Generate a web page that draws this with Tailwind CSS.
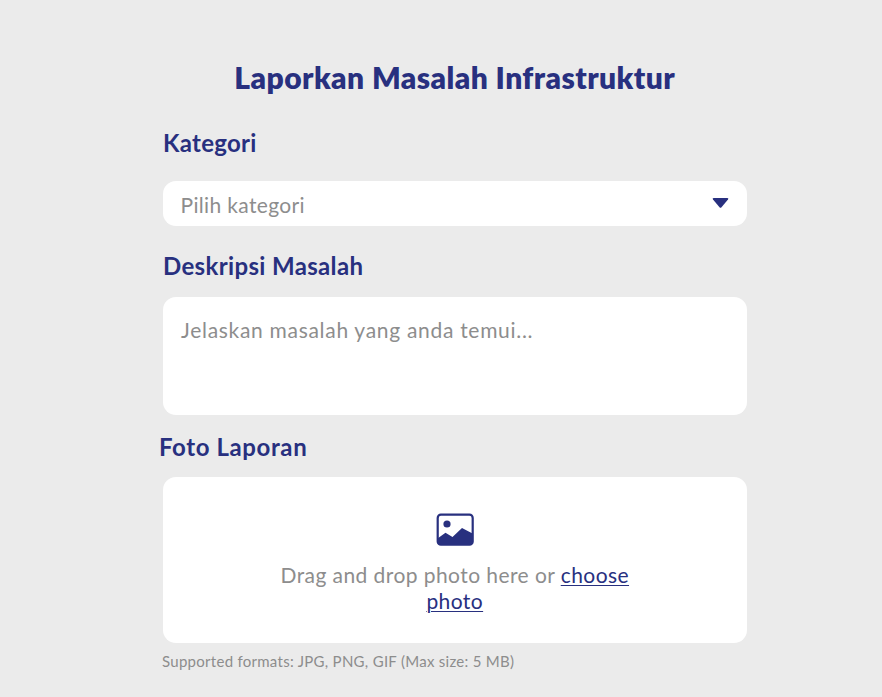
<!DOCTYPE html>
<html lang="id">
<head>
<meta charset="utf-8">
<title>Laporkan Masalah Infrastruktur</title>
<script src="https://cdn.jsdelivr.net/npm/@tailwindcss/browser@4"></script>
</head>
<body class="bg-[#ebebeb] font-['Lato',sans-serif] text-[#28307f] h-[697px] overflow-hidden">
<main class="ml-[163px] w-[583.5px] pt-[57px]">
  <h1 class="h-10 text-center text-[30px] leading-10 font-extrabold whitespace-nowrap"><span class="tracking-[0.43px]">Laporkan Masalah Infrastruktur</span></h1>
  <h2 class="mt-[30px] h-8 text-[24px] leading-8 font-bold"><span class="tracking-[0.3px]">Kategori</span></h2>
  <div class="mt-[22px] flex h-[44.5px] items-start justify-between rounded-[13px] bg-white pl-[17.5px] pr-[18px] pt-[9.5px] text-[21px] leading-7 text-[#8d8d8d]">
    <span class="tracking-[0.35px]">Pilih kategori</span>
    <svg class="mt-[6.5px] h-[12px] w-[17px] text-[#28307f]" viewBox="0 0 17 12" fill="currentColor"><path d="M1.6 1H15.4Q17 1.2 16 2.5L9.5 10.2Q8.5 11.2 7.5 10.2L1 2.5Q0 1.2 1.6 1Z"/></svg>
  </div>
  <h2 class="mt-[24px] h-8 text-[24px] leading-8 font-bold"><span class="tracking-[0.35px]">Deskripsi Masalah</span></h2>
  <div class="mt-[15.5px] h-[117.5px] rounded-[13px] bg-white px-[18px] pt-[19px] text-[21px] leading-7 text-[#8d8d8d]"><span class="tracking-[0.7px]">Jelaskan masalah yang anda temui...</span></div>
  <h2 class="-ml-1 mt-[16px] h-8 text-[24px] leading-8 font-bold"><span class="tracking-[0.6px]">Foto Laporan</span></h2>
  <div class="mt-[14.5px] flex h-[165.5px] flex-col items-center rounded-[13px] bg-white pt-9 text-[21px] leading-[26px] text-[#8d8d8d]">
    <svg class="h-[33px] w-[38px] text-[#28307f]" viewBox="0 0 38 33"><rect x="1.7" y="1.7" width="35" height="30" rx="3.2" fill="none" stroke="currentColor" stroke-width="2.2"/><circle cx="11" cy="11" r="3.6" fill="currentColor"/><path fill="currentColor" d="M1.5 25.5L9.5 19.8L16.5 24L26 15L36.5 20.5V28.5Q36.5 32 33 32H5Q1.5 32 1.5 28.5Z"/></svg>
    <p class="mt-4 text-center"><span class="tracking-[0.43px]">Drag and drop photo here or <a class="text-[#28307f] underline decoration-1 underline-offset-[2px]">choose<br>photo</a></span></p>
  </div>
  <p class="-ml-px mt-[8.5px] h-5 text-[15px] leading-5 text-[#8d8d8d]"><span class="tracking-[0.28px]">Supported formats: JPG, PNG, GIF (Max size: 5 MB)</span></p>
</main>
</body>
</html>
